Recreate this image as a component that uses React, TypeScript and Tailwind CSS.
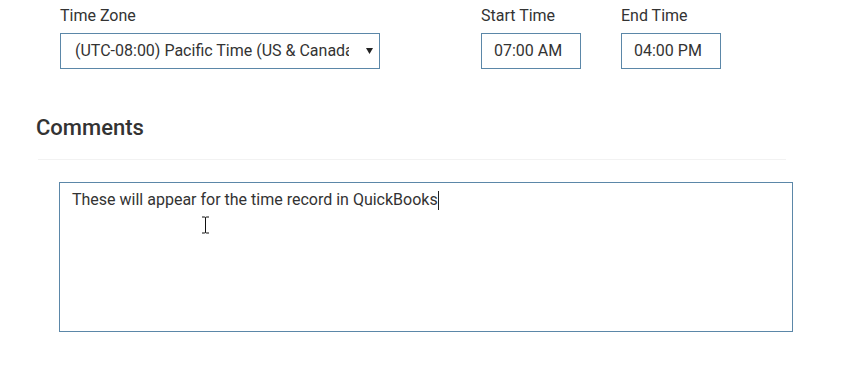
import React from 'react'

const font = { fontFamily: 'Roboto, "Liberation Sans", sans-serif' }

const Field = ({ label, width, children }: { label: string; width: string; children: React.ReactNode }) => (
    <div className={`flex flex-col ${width}`}>
        <label className="text-[16px] leading-[20px] text-[#333] mb-[7px]">{label}</label>
        {children}
    </div>
)

export default function App() {
    return (
        <div className="relative w-[859px] h-[390px] bg-white overflow-hidden" style={font}>
            {/* top row */}
            <div className="flex pt-[6px] pl-[60px]">
                <Field label="Time Zone" width="w-[320px]">
                    <div className="relative h-[36px] border border-[#5b87a8] flex items-center pl-[14px] pr-[8px]">
                        <span className="block w-[274px] overflow-hidden whitespace-nowrap text-[16px] text-[#333]">
                            (UTC-08:00) Pacific Time (US &amp; Canada)
                        </span>
                        <svg className="absolute right-[6px] top-[14px]" width="7" height="6" viewBox="0 0 7 6">
                            <path d="M0 0 H7 L3.5 6 Z" fill="#222" />
                        </svg>
                    </div>
                </Field>
                <div className="w-[101px]" />
                <Field label="Start Time" width="w-[100px]">
                    <div className="h-[36px] border border-[#5b87a8] flex items-center pl-[12px] text-[16px] text-[#333]">
                        07:00 AM
                    </div>
                </Field>
                <div className="w-[40px]" />
                <Field label="End Time" width="w-[100px]">
                    <div className="h-[36px] border border-[#5b87a8] flex items-center pl-[12px] text-[16px] text-[#333]">
                        04:00 PM
                    </div>
                </Field>
            </div>

            {/* comments */}
            <h2 className="ml-[36px] mt-[44px] text-[22px] leading-[30px] font-medium text-[#333]">Comments</h2>
            <div className="ml-[38px] w-[748px] h-px bg-[#f2f2f2] mt-[16px]" />

            <div className="ml-[59px] mt-[22px] w-[734px] h-[150px] border border-[#5b87a8] pl-[12px] pt-[7px]">
                <p className="text-[16px] leading-[20px] text-[#333] flex items-center">
                    These will appear for the time record in QuickBooks
                    <span className="inline-block w-px h-[19px] bg-[#222]" />
                </p>
            </div>

            {/* mouse i-beam */}
            <svg className="absolute left-[201px] top-[216px]" width="9" height="18" viewBox="0 0 9 18">
                <path d="M1 1 H3.5 Q4.5 1 4.5 2 V16 Q4.5 17 3.5 17 H1 M8 1 H5.5 Q4.5 1 4.5 2 M4.5 16 Q4.5 17 5.5 17 H8" fill="none" stroke="#111" strokeWidth="1" />
            </svg>
        </div>
    )
}
